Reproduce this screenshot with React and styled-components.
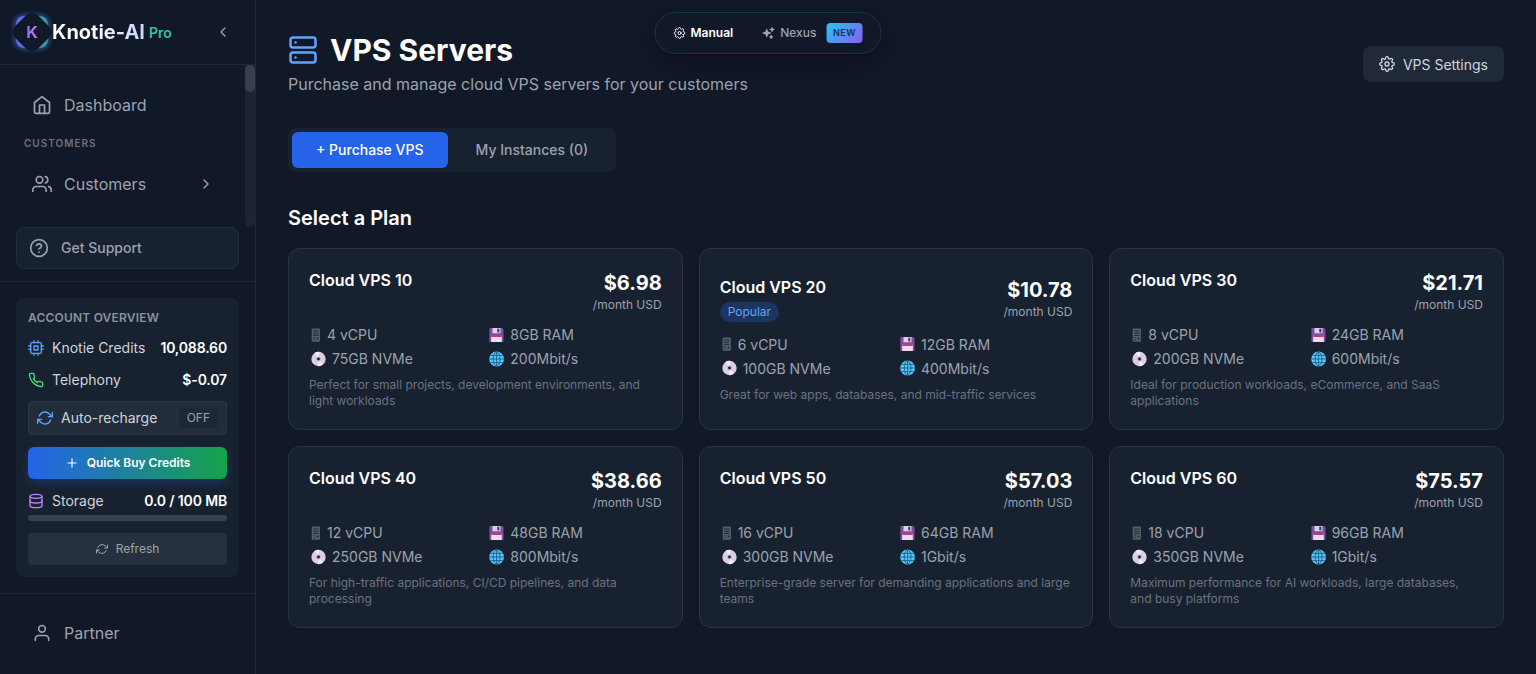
import React from "react";
import styled, { createGlobalStyle } from "styled-components";
import {
  FiChevronLeft,
  FiChevronRight,
  FiCpu,
  FiDatabase,
  FiHelpCircle,
  FiHome,
  FiPhone,
  FiPlus,
  FiRefreshCw,
  FiServer,
  FiSettings,
  FiUser,
  FiUsers,
} from "react-icons/fi";
import { HiSparkles } from "react-icons/hi2";

const colors = {
  bg: "#111827",
  panel: "#18212f",
  line: "#1e2736",
  border: "#2a3444",
  muted: "#9ca3af",
  dim: "#6b7280",
  blue: "#2563eb",
};

const GlobalStyle = createGlobalStyle`
  *, *::before, *::after {
    box-sizing: border-box;
  }
  body {
    margin: 0;
    background: ${colors.bg};
    color: #ffffff;
    font-family: Inter, "Liberation Sans", sans-serif;
    overflow: hidden;
  }
  button {
    font-family: inherit;
    border: 0;
    margin: 0;
    padding: 0;
    color: inherit;
    background: none;
  }
  svg {
    display: block;
    flex-shrink: 0;
  }
`;

const Page = styled.div`
  display: flex;
  width: 100%;
  height: 674px;
`;

/* sidebar */

const Sidebar = styled.aside`
  display: flex;
  flex-direction: column;
  width: 256px;
  flex-shrink: 0;
  border-right: 1px solid ${colors.line};
`;

const Brand = styled.div`
  display: flex;
  align-items: center;
  height: 65px;
  padding: 0 24px 0 12px;
  border-bottom: 1px solid ${colors.line};
  svg:last-child {
    margin-left: auto;
    color: ${colors.muted};
  }
`;

const Logo = styled.div`
  position: relative;
  display: flex;
  align-items: center;
  justify-content: center;
  width: 40px;
  height: 40px;
  &::before {
    content: "";
    position: absolute;
    inset: 4px;
    border-radius: 8px;
    background: linear-gradient(90deg, #6366f1, #5b7bd8 50%, #2fa39a);
    box-shadow: -1px 0 6px rgba(99, 102, 241, 0.6), 1px 0 6px rgba(45, 190, 180, 0.4);
  }
  &::after {
    content: "";
    position: absolute;
    inset: 4px;
    border-radius: 8px;
    background: ${colors.bg};
    transform: rotate(45deg);
  }
`;

const LogoLetter = styled.span`
  position: relative;
  z-index: 1;
  font-size: 16px;
  font-weight: 700;
  background: linear-gradient(90deg, #8b6cf0, #c084fc);
  background-clip: text;
  color: transparent;
`;

const BrandName = styled.span`
  font-size: 20px;
  font-weight: 700;
  line-height: 28px;
  background: linear-gradient(90deg, #ffffff 40%, #c7d2fe);
  background-clip: text;
  color: transparent;
`;

const BrandTag = styled.span`
  margin: 1px 0 0 4px;
  font-size: 14px;
  font-weight: 600;
  color: #2dc4a8;
`;

const Nav = styled.nav`
  display: flex;
  height: 162px;
`;

const NavList = styled.div`
  flex: 1;
  padding-top: 20px;
`;

const ScrollTrack = styled.div`
  width: 10px;
  border-radius: 0 0 5px 5px;
  background: #1c2431;
`;

const ScrollThumb = styled.div`
  height: 27px;
  border-radius: 5px;
  background: #373f4c;
`;

const NavItem = styled.div`
  display: flex;
  align-items: center;
  gap: 12px;
  height: 40px;
  padding: 0 31.5px 0 32px;
  font-size: 16px;
  color: ${colors.muted};
  svg:nth-of-type(2) {
    margin-left: auto;
  }
`;

const NavLabel = styled.div`
  margin: 10px 0 13px;
  padding-left: 24px;
  font-size: 10px;
  line-height: 16px;
  font-weight: 600;
  letter-spacing: 1px;
  color: ${colors.dim};
`;

const Support = styled.button`
  display: flex;
  align-items: center;
  gap: 12px;
  height: 42px;
  margin: 0 16px 12px;
  padding: 0 12px 1px;
  border: 1px solid #222d3b;
  border-radius: 8px;
  background: ${colors.panel};
  font-size: 14px;
  font-weight: 500;
  color: ${colors.muted};
`;

const AccountSection = styled.div`
  padding: 16px;
  border-top: 1px solid ${colors.line};
  border-bottom: 1px solid ${colors.line};
`;

const Account = styled.div`
  height: 279px;
  padding: 12px;
  border-radius: 8px;
  background: ${colors.panel};
`;

const AccountTitle = styled.div`
  font-size: 12px;
  line-height: 16px;
  font-weight: 600;
  letter-spacing: 0.2px;
  color: #8b929e;
`;

const AccountRow = styled.div`
  display: flex;
  align-items: center;
  gap: 8px;
  height: 20px;
  margin-top: 12px;
  padding-bottom: 1px;
  font-size: 14px;
  color: #d1d5db;
  svg {
    color: ${(p) => p.$tint};
  }
  strong {
    margin-left: auto;
    font-weight: 600;
    letter-spacing: -0.15px;
    color: #ffffff;
  }
`;

const Recharge = styled.div`
  display: flex;
  align-items: center;
  gap: 8px;
  height: 34px;
  margin-top: 11px;
  padding: 0 8px 1px;
  border: 1px solid #2d3746;
  border-radius: 4px;
  background: #222c3b;
  font-size: 14px;
  color: #d1d5db;
  svg {
    color: #60a5fa;
  }
`;

const OffTag = styled.span`
  margin-left: auto;
  padding: 2px 8px;
  border-radius: 4px;
  background: #1e2735;
  font-size: 12px;
  line-height: 16px;
  color: ${colors.muted};
`;

const QuickBuy = styled.button`
  display: flex;
  align-items: center;
  justify-content: center;
  gap: 8px;
  width: 100%;
  height: 32px;
  margin-top: 12px;
  padding-bottom: 1px;
  border-radius: 6px;
  background: linear-gradient(90deg, #2563eb, #16a34a);
  box-shadow: 0 4px 10px rgba(37, 99, 235, 0.25);
  font-size: 12px;
  font-weight: 600;
`;

const StorageBar = styled.div`
  height: 6px;
  margin-top: 4px;
  border-radius: 3px;
  background: #374151;
`;

const Refresh = styled.button`
  display: flex;
  align-items: center;
  justify-content: center;
  gap: 8px;
  width: 100%;
  height: 32px;
  margin-top: 12px;
  padding-bottom: 1px;
  border-radius: 4px;
  background: #27303e;
  font-size: 12px;
  color: ${colors.muted};
`;

const Partner = styled(NavItem)`
  margin-top: 19px;
`;

/* main area */

const Main = styled.main`
  flex: 1;
  padding: 32px;
`;

const Header = styled.header`
  display: flex;
  align-items: center;
  justify-content: space-between;
  height: 64px;
`;

const Title = styled.h1`
  display: flex;
  align-items: center;
  gap: 12px;
  margin: 0 0 4px;
  font-size: 30px;
  line-height: 36px;
  font-weight: 700;
  svg {
    color: #60a5fa;
  }
`;

const Subtitle = styled.p`
  margin: 0;
  font-size: 16px;
  line-height: 24px;
  color: ${colors.muted};
`;

const SettingsButton = styled.button`
  display: flex;
  align-items: center;
  gap: 8px;
  height: 36px;
  padding: 0 16px;
  border-radius: 8px;
  background: #1f2937;
  font-size: 14px;
  color: #d1d5db;
`;

const Tabs = styled.div`
  display: flex;
  gap: 4px;
  width: fit-content;
  margin-top: 32px;
  padding: 4px;
  border-radius: 8px;
  background: ${colors.panel};
`;

const Tab = styled.button`
  height: 36px;
  padding: 0 24px 1px;
  border-radius: 6px;
  font-size: 14px;
  font-weight: 500;
  color: ${(p) => (p.$active ? "#ffffff" : colors.muted)};
  background: ${(p) => (p.$active ? colors.blue : "transparent")};
`;

const SectionTitle = styled.h2`
  margin: 32px 0 16px;
  font-size: 20px;
  line-height: 28px;
  font-weight: 600;
`;

const Plans = styled.div`
  display: grid;
  grid-template-columns: repeat(3, 1fr);
  gap: 15.6px 16px;
`;

const Card = styled.div`
  display: flex;
  flex-direction: column;
  justify-content: center;
  height: 182px;
  padding: 20px;
  border: 1px solid ${colors.border};
  border-radius: 12px;
  background: ${colors.panel};
`;

const CardTop = styled.div`
  display: flex;
  justify-content: space-between;
  margin-bottom: 12px;
`;

const PlanName = styled.div`
  margin-bottom: 1px;
  font-size: 16px;
  line-height: 23px;
  font-weight: 600;
`;

const Popular = styled.div`
  width: fit-content;
  margin: 3px 0 1px;
  padding: 2px 8px;
  border-radius: 10px;
  background: #1c355e;
  font-size: 12px;
  line-height: 16px;
  color: #60a5fa;
`;

const Price = styled.div`
  font-size: 20px;
  line-height: 28px;
  font-weight: 700;
  text-align: right;
`;

const Period = styled.div`
  font-size: 12px;
  line-height: 16px;
  text-align: right;
  color: ${colors.muted};
`;

const Specs = styled.div`
  display: grid;
  grid-template-columns: 1fr 1fr;
  gap: 4px 8px;
`;

const Spec = styled.div`
  display: flex;
  align-items: center;
  gap: 4px;
  height: 20px;
  padding-bottom: 0.2px;
  font-size: 14px;
  color: ${colors.muted};
  &:nth-child(even) {
    margin-left: -1px;
  }
`;

const Description = styled.p`
  margin: 8px 0 0;
  font-size: 12px;
  line-height: 16px;
  color: ${colors.dim};
`;

/* floating mode switch */

const ModeSwitch = styled.div`
  position: absolute;
  top: 12px;
  left: 50%;
  transform: translateX(-50%);
  display: flex;
  height: 42px;
  padding: 4px;
  border: 1px solid #173647;
  border-radius: 21px;
  background: ${colors.bg};
  box-shadow: 0 8px 24px rgba(0, 0, 0, 0.35);
`;

const Mode = styled.button`
  display: flex;
  align-items: center;
  gap: 5px;
  padding: 0 14px 1px;
  font-size: 12px;
  font-weight: ${(p) => (p.$active ? 600 : 500)};
  color: ${(p) => (p.$active ? "#ffffff" : colors.muted)};
`;

const NewTag = styled.span`
  width: 36px;
  margin-left: 5px;
  border-radius: 4px;
  background: linear-gradient(135deg, #22c7ee, #8b5cf6);
  font-size: 9px;
  line-height: 20px;
  font-weight: 600;
  letter-spacing: 0.4px;
  text-align: center;
  color: #123252;
`;

const TowerIcon = () => (
  <svg width="14" height="18" viewBox="0 0 14 18">
    <rect x="2.7" y="2.5" width="8.2" height="13.2" rx="0.6" fill="#4e6068" />
    <path d="M4.2 5h5.3M4.2 7.2h5.3M4.2 9.4h5.3" stroke="#1d2a36" strokeWidth="1" />
    <path d="M4.2 11.6h2M4.2 13.6h2" stroke="#25333d" strokeWidth="0.9" />
    <circle cx="8.5" cy="12.4" r="1" fill="#1d2a36" />
  </svg>
);

const FloppyIcon = () => (
  <svg width="18" height="18" viewBox="0 0 18 18">
    <path d="M2.2 2h12l1.3 1.2V16H1.4V2.8Z" fill="#7b4fa0" />
    <rect x="4.5" y="2" width="8" height="5.3" fill="#d9cfe8" />
    <rect x="9.3" y="2.7" width="2" height="3.7" fill="#43305f" />
    <rect x="3.2" y="9" width="10.6" height="7" fill="#eddcf2" />
    <rect x="3.2" y="9" width="10.6" height="2" fill="#c43a76" />
  </svg>
);

const DiscIcon = () => (
  <svg width="19" height="18" viewBox="0 0 19 18">
    <circle cx="9.5" cy="9" r="7.2" fill="#dccfe3" />
    <path d="M9.5 9 5.5 3A7.2 7.2 0 0 1 10.5 1.9ZM9.5 9l4.5 5.6a7.2 7.2 0 0 1-5 1.5Z" fill="#f2eaf6" />
    <circle cx="9.5" cy="9" r="2.5" fill="#c9b8d1" />
    <circle cx="9.5" cy="9" r="1.4" fill="#18212f" />
  </svg>
);

const GlobeIcon = () => (
  <svg width="18" height="18" viewBox="0 0 18 18" fill="none" stroke="#1b5c88" strokeWidth="0.9">
    <circle cx="8.6" cy="9" r="7.4" fill="#57c8fa" stroke="none" />
    <ellipse cx="8.6" cy="9" rx="3.4" ry="7.1" />
    <path d="M8.6 1.8v14.4M1.4 9h14.4M2.6 5.4h12M2.6 12.6h12" />
  </svg>
);

const plans = [
  { name: "Cloud VPS 10", price: "$6.98", cpu: "4 vCPU", ram: "8GB RAM", disk: "75GB NVMe", net: "200Mbit/s", text: "Perfect for small projects, development environments, and light workloads" },
  { name: "Cloud VPS 20", price: "$10.78", cpu: "6 vCPU", ram: "12GB RAM", disk: "100GB NVMe", net: "400Mbit/s", text: "Great for web apps, databases, and mid-traffic services", popular: true },
  { name: "Cloud VPS 30", price: "$21.71", cpu: "8 vCPU", ram: "24GB RAM", disk: "200GB NVMe", net: "600Mbit/s", text: "Ideal for production workloads, eCommerce, and SaaS applications" },
  { name: "Cloud VPS 40", price: "$38.66", cpu: "12 vCPU", ram: "48GB RAM", disk: "250GB NVMe", net: "800Mbit/s", text: "For high-traffic applications, CI/CD pipelines, and data processing" },
  { name: "Cloud VPS 50", price: "$57.03", cpu: "16 vCPU", ram: "64GB RAM", disk: "300GB NVMe", net: "1Gbit/s", text: "Enterprise-grade server for demanding applications and large teams" },
  { name: "Cloud VPS 60", price: "$75.57", cpu: "18 vCPU", ram: "96GB RAM", disk: "350GB NVMe", net: "1Gbit/s", text: "Maximum performance for AI workloads, large databases, and busy platforms" },
];

const PlanCard = ({ plan }) => (
  <Card>
    <CardTop>
      <div>
        <PlanName>{plan.name}</PlanName>
        {plan.popular && <Popular>Popular</Popular>}
      </div>
      <div>
        <Price>{plan.price}</Price>
        <Period>/month USD</Period>
      </div>
    </CardTop>
    <Specs>
      <Spec><TowerIcon />{plan.cpu}</Spec>
      <Spec><FloppyIcon />{plan.ram}</Spec>
      <Spec><DiscIcon />{plan.disk}</Spec>
      <Spec><GlobeIcon />{plan.net}</Spec>
    </Specs>
    <Description>{plan.text}</Description>
  </Card>
);

const App = () => {
  return (
    <>
      <GlobalStyle />
      <Page>
        <Sidebar>
          <Brand>
            <Logo>
              <LogoLetter>K</LogoLetter>
            </Logo>
            <BrandName>Knotie-AI</BrandName>
            <BrandTag>Pro</BrandTag>
            <FiChevronLeft size={16} />
          </Brand>
          <Nav>
            <NavList>
              <NavItem>
                <FiHome size={20} />
                Dashboard
              </NavItem>
              <NavLabel>CUSTOMERS</NavLabel>
              <NavItem>
                <FiUsers size={20} />
                Customers
                <FiChevronRight size={16} />
              </NavItem>
            </NavList>
            <ScrollTrack>
              <ScrollThumb />
            </ScrollTrack>
          </Nav>
          <Support>
            <FiHelpCircle size={20} />
            Get Support
          </Support>
          <AccountSection>
            <Account>
              <AccountTitle>ACCOUNT OVERVIEW</AccountTitle>
              <AccountRow $tint="#60a5fa">
                <FiCpu size={16} />
                Knotie Credits
                <strong>10,088.60</strong>
              </AccountRow>
              <AccountRow $tint="#4ade80">
                <FiPhone size={16} />
                Telephony
                <strong>$-0.07</strong>
              </AccountRow>
              <Recharge>
                <FiRefreshCw size={16} />
                Auto-recharge
                <OffTag>OFF</OffTag>
              </Recharge>
              <QuickBuy>
                <FiPlus size={14} />
                Quick Buy Credits
              </QuickBuy>
              <AccountRow $tint="#c084fc">
                <FiDatabase size={16} />
                Storage
                <strong>0.0 / 100 MB</strong>
              </AccountRow>
              <StorageBar />
              <Refresh>
                <FiRefreshCw size={12} />
                Refresh
              </Refresh>
            </Account>
          </AccountSection>
          <Partner>
            <FiUser size={20} />
            Partner
          </Partner>
        </Sidebar>
        <Main>
          <Header>
            <div>
              <Title>
                <FiServer size={30} />
                VPS Servers
              </Title>
              <Subtitle>Purchase and manage cloud VPS servers for your customers</Subtitle>
            </div>
            <SettingsButton>
              <FiSettings size={16} />
              VPS Settings
            </SettingsButton>
          </Header>
          <Tabs>
            <Tab $active>+ Purchase VPS</Tab>
            <Tab>My Instances (0)</Tab>
          </Tabs>
          <SectionTitle>Select a Plan</SectionTitle>
          <Plans>
            {plans.map((plan) => (
              <PlanCard key={plan.name} plan={plan} />
            ))}
          </Plans>
        </Main>
      </Page>
      <ModeSwitch>
        <Mode $active>
          <FiSettings size={12} />
          Manual
        </Mode>
        <Mode>
          <HiSparkles size={14} />
          Nexus
          <NewTag>NEW</NewTag>
        </Mode>
      </ModeSwitch>
    </>
  );
};

export default App;
